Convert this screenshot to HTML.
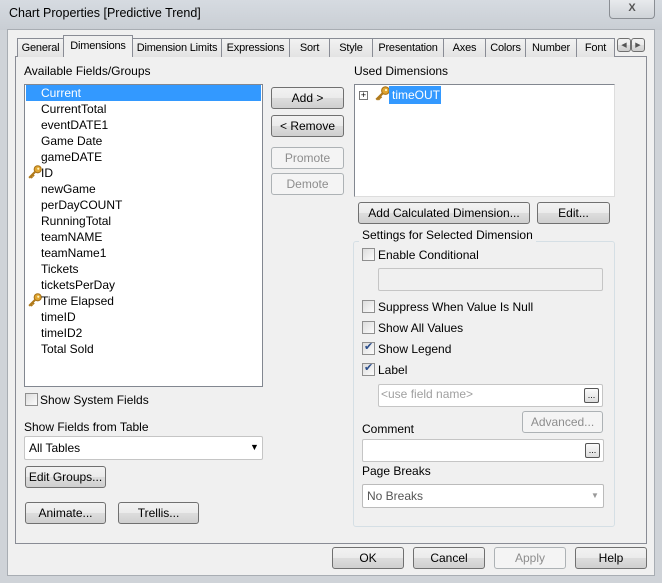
<!DOCTYPE html><html><head><style>
*{box-sizing:border-box}body{margin:0;width:662px;height:583px;overflow:hidden;background:#cfd3d8;font:12px "Liberation Sans",sans-serif;color:#000;position:relative}
.a{position:absolute;white-space:nowrap}
.btn{position:absolute;border:1px solid #707070;border-radius:3px;background:linear-gradient(#f2f2f2,#ebebeb 50%,#dddddd 51%,#cfcfcf);text-align:center;font-size:12px;display:flex;align-items:center;justify-content:center;white-space:nowrap}
.dis{border-color:#adb2b5;background:#f4f4f4;color:#8d8d8d}
.tab{position:absolute;top:38px;height:19px;border:1px solid #898c95;border-bottom:none;background:linear-gradient(#f2f2f2,#e3e3e3);padding-top:3px;font-size:11px;text-align:center;white-space:nowrap;overflow:hidden;letter-spacing:-0.2px}
.cb{position:absolute;width:13px;height:13px;border:1px solid #8f8f8f;background:linear-gradient(135deg,#ddd,#fbfbfb)}
.cb.on::after{content:"✔";position:absolute;left:1px;top:-3px;font-size:11px;color:#2a4d8a}
.field{position:absolute;border:1px solid #c5c5c5;background:#fff;border-radius:2px}
.it{position:absolute;left:41px;font-size:12px}
.key{position:absolute;width:15px;height:15px}
.dots{position:absolute;width:15px;height:15px;border:1px solid #555;border-radius:2px;background:linear-gradient(#fafafa,#ddd);font-size:9px;text-align:center;line-height:12px}
</style></head><body>
<svg width="0" height="0" style="position:absolute"><defs><symbol id="k" viewBox="0 0 14 14"><circle cx="10" cy="4" r="3.3" fill="#e0a530" stroke="#a8731a"/><circle cx="10.5" cy="3.5" r="1" fill="#fff3c0"/><path d="M8 6 L2 12 M3.5 10.5 L5 12 M5 9 L6.5 10.5" stroke="#b07a1c" stroke-width="2" fill="none"/></symbol></defs></svg>
<div class="a" style="left:0;top:0;width:662px;height:30px;background:linear-gradient(#d6dbe1,#c9ced4)"></div>
<div class="a" style="left:9px;top:6px;font-size:12.5px">Chart Properties [Predictive Trend]</div>
<div class="a" style="left:609px;top:0;width:46px;height:19px;border:1px solid #8a8e94;border-top:none;border-radius:0 0 4px 4px;background:linear-gradient(#e8eaed,#cfd3d8);text-align:center;font:bold 11px 'Liberation Sans';color:#555;line-height:17px">X</div>
<div class="a" style="left:7px;top:29px;width:648px;height:547px;background:#f0f0f0;border:1px solid #a8adb3"></div>
<div class="a" style="left:15px;top:56px;width:632px;height:488px;border:1px solid #898c95;background:#f0f0f0"></div>
<div class="tab" style="left:17px;width:47px">General</div>
<div class="tab" style="left:132px;width:90px">Dimension Limits</div>
<div class="tab" style="left:221px;width:69px">Expressions</div>
<div class="tab" style="left:289px;width:41px">Sort</div>
<div class="tab" style="left:329px;width:44px">Style</div>
<div class="tab" style="left:372px;width:72px">Presentation</div>
<div class="tab" style="left:443px;width:43px">Axes</div>
<div class="tab" style="left:485px;width:41px">Colors</div>
<div class="tab" style="left:525px;width:52px">Number</div>
<div class="tab" style="left:576px;width:39px">Font</div>
<div class="tab" style="left:63px;top:35px;height:22px;width:70px;background:#f0f0f0;padding-top:4px;z-index:2">Dimensions</div>
<div class="btn" style="left:617px;top:38px;width:14px;height:14px;font-size:7px;color:#555">◀</div>
<div class="btn" style="left:631px;top:38px;width:14px;height:14px;font-size:7px;color:#555">▶</div>
<div class="a" style="left:24px;top:64px">Available Fields/Groups</div>
<div class="a" style="left:24px;top:84px;width:239px;height:303px;border:1px solid #828790;background:#fff"></div>
<div class="a" style="left:26px;top:85px;width:235px;height:16px;background:#3399ff"></div>
<div class="it" style="top:86px;color:#fff">Current</div>
<div class="it" style="top:102px">CurrentTotal</div>
<div class="it" style="top:118px">eventDATE1</div>
<div class="it" style="top:134px">Game Date</div>
<div class="it" style="top:150px">gameDATE</div>
<svg class="key" style="left:27px;top:165px"><use href="#k"/></svg><div class="it" style="top:166px">ID</div>
<div class="it" style="top:182px">newGame</div>
<div class="it" style="top:198px">perDayCOUNT</div>
<div class="it" style="top:214px">RunningTotal</div>
<div class="it" style="top:230px">teamNAME</div>
<div class="it" style="top:246px">teamName1</div>
<div class="it" style="top:262px">Tickets</div>
<div class="it" style="top:278px">ticketsPerDay</div>
<svg class="key" style="left:27px;top:293px"><use href="#k"/></svg><div class="it" style="top:294px">Time Elapsed</div>
<div class="it" style="top:310px">timeID</div>
<div class="it" style="top:326px">timeID2</div>
<div class="it" style="top:342px">Total Sold</div>
<div class="cb" style="left:25px;top:393px"></div><div class="a" style="left:40px;top:393px">Show System Fields</div>
<div class="a" style="left:24px;top:420px">Show Fields from Table</div>
<div class="field" style="left:24px;top:436px;width:239px;height:24px"></div>
<div class="a" style="left:29px;top:441px">All Tables</div>
<div class="a" style="left:250px;top:442px;font-size:9px">▼</div>
<div class="btn" style="left:25px;top:466px;width:81px;height:22px">Edit Groups...</div>
<div class="btn" style="left:25px;top:502px;width:81px;height:22px">Animate...</div>
<div class="btn" style="left:118px;top:502px;width:81px;height:22px">Trellis...</div>
<div class="btn" style="left:271px;top:87px;width:73px;height:22px">Add &gt;</div>
<div class="btn" style="left:271px;top:115px;width:73px;height:22px">&lt; Remove</div>
<div class="btn dis" style="left:271px;top:147px;width:73px;height:22px">Promote</div>
<div class="btn dis" style="left:271px;top:173px;width:73px;height:22px">Demote</div>
<div class="a" style="left:354px;top:64px">Used Dimensions</div>
<div class="a" style="left:354px;top:84px;width:261px;height:113px;border:1px solid #828790;border-right-color:#ddd;border-bottom-color:#ddd;background:#fff"></div>
<div class="a" style="left:359px;top:91px;width:9px;height:9px;border:1px solid #777;font-size:9px;line-height:7px;text-align:center;background:#fff">+</div>
<svg class="key" style="left:374px;top:86px;width:16px;height:16px"><use href="#k"/></svg>
<div class="a" style="left:389px;top:86px;width:52px;height:18px;background:#3399ff;color:#fff;padding:2px 0 0 3px">timeOUT</div>
<div class="btn" style="left:358px;top:202px;width:172px;height:22px">Add Calculated Dimension...</div>
<div class="btn" style="left:537px;top:202px;width:73px;height:22px">Edit...</div>
<div class="a" style="left:353px;top:241px;width:262px;height:286px;border:1px solid #d5dfe5;border-radius:3px"></div>
<div class="a" style="left:359px;top:228px;background:#f0f0f0;padding:0 3px">Settings for Selected Dimension</div>
<div class="cb" style="left:362px;top:248px"></div><div class="a" style="left:378px;top:248px">Enable Conditional</div>
<div class="a" style="left:378px;top:268px;width:225px;height:23px;border:1px solid #c5c5c5;background:#f0f0f0;border-radius:2px"></div>
<div class="cb" style="left:362px;top:300px"></div><div class="a" style="left:378px;top:300px">Suppress When Value Is Null</div>
<div class="cb" style="left:362px;top:321px"></div><div class="a" style="left:378px;top:321px">Show All Values</div>
<div class="cb on" style="left:362px;top:342px"></div><div class="a" style="left:378px;top:342px">Show Legend</div>
<div class="cb on" style="left:362px;top:363px"></div><div class="a" style="left:378px;top:363px">Label</div>
<div class="field" style="left:378px;top:384px;width:225px;height:23px"></div>
<div class="a" style="left:381px;top:387px;color:#a0a0a0">&lt;use field name&gt;</div>
<div class="dots" style="left:584px;top:388px">...</div>
<div class="btn dis" style="left:522px;top:411px;width:81px;height:22px">Advanced...</div>
<div class="a" style="left:362px;top:422px">Comment</div>
<div class="field" style="left:362px;top:439px;width:242px;height:23px"></div>
<div class="dots" style="left:585px;top:443px">...</div>
<div class="a" style="left:362px;top:464px">Page Breaks</div>
<div class="field" style="left:362px;top:484px;width:242px;height:24px;border-color:#bbb"></div>
<div class="a" style="left:367px;top:489px;color:#555">No Breaks</div>
<div class="a" style="left:591px;top:491px;font-size:8px;color:#999">▼</div>
<div class="btn" style="left:332px;top:547px;width:72px;height:22px">OK</div>
<div class="btn" style="left:413px;top:547px;width:72px;height:22px">Cancel</div>
<div class="btn dis" style="left:494px;top:547px;width:72px;height:22px">Apply</div>
<div class="btn" style="left:575px;top:547px;width:72px;height:22px">Help</div>
</body></html>
